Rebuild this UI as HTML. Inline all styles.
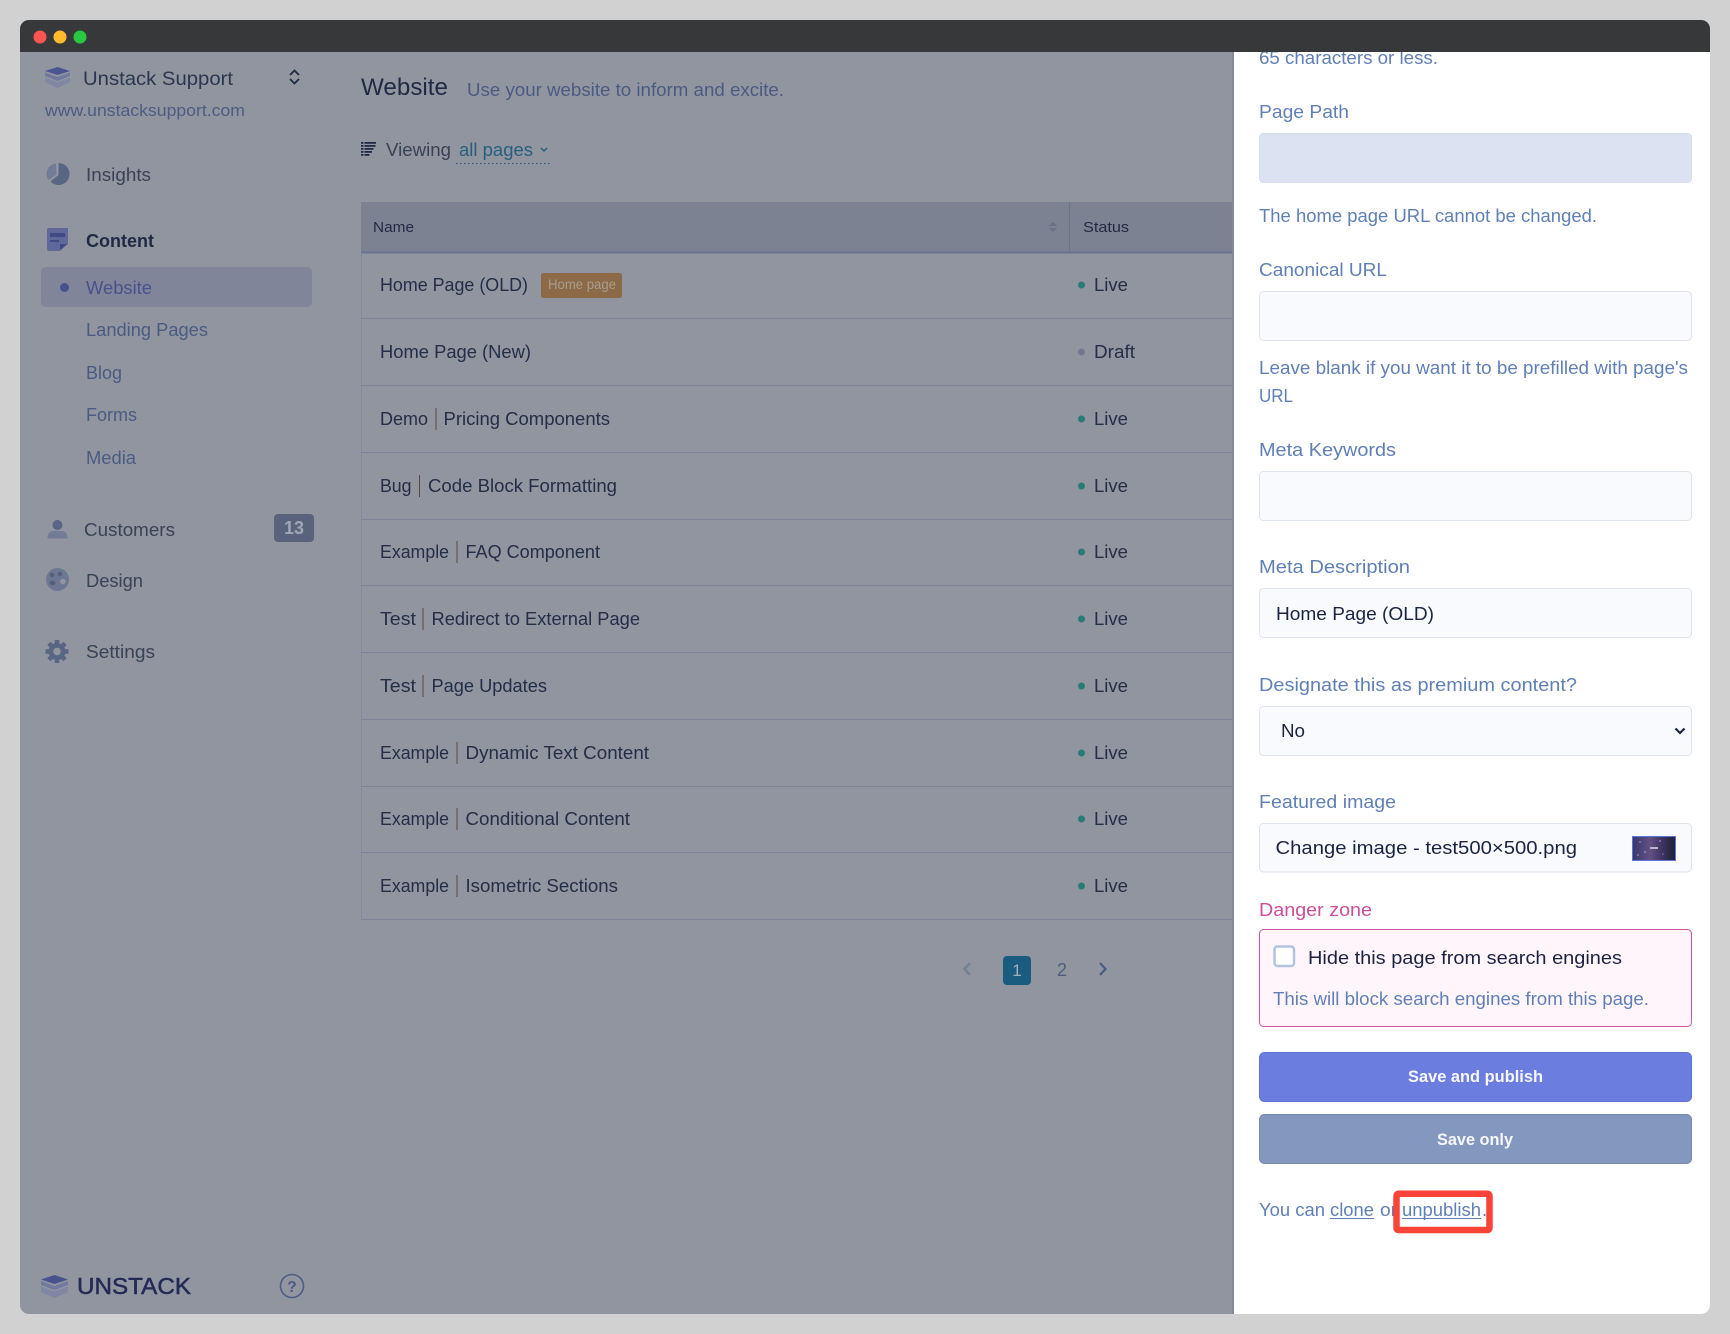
<!DOCTYPE html>
<html lang="en"><head><meta charset="utf-8"><title>Website</title>
<style>
html,body{margin:0;padding:0;background:#d1d1d1;width:1730px;height:1334px;overflow:hidden}
svg{display:block}
text{font-family:"Liberation Sans",sans-serif;font-size:18.5px;fill:#1f2a44}
.nav{fill:#3a4256}.sub{fill:#4a5b82}.lab{fill:#6080b5}.dk{fill:#1b2340}.live{fill:#252d48}
.p{font-size:23px;fill:#5f4a40}
</style></head><body>
<svg width="1730" height="1334" viewBox="0 0 1730 1334" xmlns="http://www.w3.org/2000/svg">
<defs>
<clipPath id="win"><rect x="20" y="20" width="1690" height="1294" rx="9"/></clipPath>
<linearGradient id="th" x1="0" y1="0" x2="1" y2="0"><stop offset="0" stop-color="#38386a"/><stop offset=".4" stop-color="#625084"/><stop offset=".7" stop-color="#3c3460"/><stop offset="1" stop-color="#1c2036"/></linearGradient>
</defs>
<rect width="1730" height="1334" fill="#d1d1d1"/>
<g clip-path="url(#win)">
<rect x="20" y="20" width="1690" height="1294" fill="#91959f"/>

<!-- sidebar -->
<path d="M57.5 67 L70 71 L57.5 75 L45 71Z" fill="#4a5490"/>
<path d="M45 72.5 L57.5 77 L70 72.5 L70 76 L57.5 81 L45 76Z" fill="#707a9e"/>
<path d="M45 77.5 L57.5 82.5 L70 77.5 L70 82 L57.5 88 L45 82Z" fill="#7f87a2"/>
<text x="83" y="85" style="font-size:19.5px;fill:#2c3650" textLength="150" lengthAdjust="spacingAndGlyphs">Unstack Support</text>
<path d="M290 75 L294.5 70.5 L299 75 M290 79 L294.5 83.5 L299 79" fill="none" stroke="#1f2a44" stroke-width="1.8"/>
<text x="45" y="116" style="font-size:16.5px;fill:#4c5c82" textLength="200" lengthAdjust="spacingAndGlyphs">www.unstacksupport.com</text>

<path d="M56 163.5 A10.5 10.5 0 0 0 48.5 180 L56.5 174.5Z" fill="#727c96"/>
<path d="M58.5 163 A11 11 0 1 1 50.5 181.5 L58.5 175Z" fill="#586583"/>
<text x="86" y="181" class="nav" textLength="65" lengthAdjust="spacingAndGlyphs">Insights</text>

<path d="M47 230 Q47 228 49 228 L68 228 L68 244 L60 251 L49 251 Q47 251 47 249Z" fill="#60689a"/>
<rect x="50" y="233" width="15" height="4" fill="#414a84"/><rect x="50" y="240" width="9" height="2" fill="#414a84"/>
<path d="M60 250 L60 244 L67 244Z" fill="#414a84"/>
<text x="86" y="247" style="font-weight:bold;fill:#1f2a44" textLength="68" lengthAdjust="spacingAndGlyphs">Content</text>

<rect x="41" y="267" width="271" height="40" rx="5" fill="#80859a"/>
<circle cx="64.5" cy="287.5" r="4.5" fill="#48528c"/>
<text x="86" y="294" style="fill:#48528c" textLength="66" lengthAdjust="spacingAndGlyphs">Website</text>
<text x="86" y="336" class="sub" textLength="122" lengthAdjust="spacingAndGlyphs">Landing Pages</text>
<text x="86" y="379" class="sub" textLength="36" lengthAdjust="spacingAndGlyphs">Blog</text>
<text x="86" y="421" class="sub" textLength="51" lengthAdjust="spacingAndGlyphs">Forms</text>
<text x="86" y="464" class="sub" textLength="50" lengthAdjust="spacingAndGlyphs">Media</text>

<circle cx="57.5" cy="525" r="5" fill="#586583"/>
<path d="M47.5 538.5 Q47.5 531.5 53 531 L62 531 Q67.5 531.5 67.5 538.5Z" fill="#727c96"/>
<text x="84" y="536" class="nav" textLength="91" lengthAdjust="spacingAndGlyphs">Customers</text>
<rect x="274" y="514" width="40" height="28" rx="4" fill="#5a637c"/>
<text x="294" y="534" text-anchor="middle" style="font-size:18px;font-weight:bold;fill:#a0a7b6">13</text>

<circle cx="57.5" cy="579.5" r="11.5" fill="#6d7792"/>
<circle cx="52" cy="575" r="2.2" fill="#545d7a"/><circle cx="60" cy="574" r="2.2" fill="#545d7a"/><ellipse cx="52.5" cy="583" rx="3" ry="2.2" fill="#545d7a"/><circle cx="63" cy="581.5" r="2.8" fill="#91959f"/>
<text x="86" y="587" class="nav" textLength="57" lengthAdjust="spacingAndGlyphs">Design</text>

<circle cx="57" cy="651.5" r="8.5" fill="#586583"/>
<g stroke="#586583" stroke-width="4.5"><path d="M57 640V663"/><path d="M45.5 651.5H68.5"/><path d="M48.9 643.4L65.1 659.6"/><path d="M48.9 659.6L65.1 643.4"/></g>
<circle cx="57" cy="651.5" r="3.8" fill="#91959f"/>
<text x="86" y="658" class="nav" textLength="69" lengthAdjust="spacingAndGlyphs">Settings</text>

<path d="M54.5 1275 L68 1279.5 L54.5 1284 L41 1279.5Z" fill="#48528c"/>
<path d="M41 1281 L54.5 1286 L68 1281 L68 1285 L54.5 1290 L41 1285Z" fill="#707a9e"/>
<path d="M41 1286.5 L54.5 1291.5 L68 1286.5 L68 1292 L54.5 1298 L41 1292Z" fill="#7f87a2"/>
<text x="77" y="1294" style="font-size:23.5px;fill:#232a55;stroke:#232a55;stroke-width:.5px" textLength="114" lengthAdjust="spacingAndGlyphs">UNSTACK</text>
<circle cx="292" cy="1286" r="11.5" fill="none" stroke="#4c5c82" stroke-width="1.6"/>
<text x="292" y="1292" text-anchor="middle" style="font-size:15.5px;font-weight:bold;fill:#4c5c82">?</text>

<!-- main -->
<text x="361" y="95" style="font-size:24.5px;fill:#1f2a44" textLength="87" lengthAdjust="spacingAndGlyphs">Website</text>
<text x="467" y="96" class="sub" textLength="317" lengthAdjust="spacingAndGlyphs">Use your website to inform and excite.</text>
<g fill="#232a48">
<rect x="361" y="142" width="2.5" height="1.8"/><rect x="361" y="145" width="2.5" height="1.8"/><rect x="361" y="148" width="2.5" height="1.8"/><rect x="361" y="151" width="2.5" height="1.8"/><rect x="361" y="154" width="2.5" height="1.8"/>
<rect x="364.5" y="142" width="11.5" height="1.8"/><rect x="364.5" y="145" width="11" height="1.8"/><rect x="364.5" y="148" width="9" height="1.8"/><rect x="364.5" y="151" width="7.5" height="1.8"/><rect x="364.5" y="154" width="5" height="1.8"/>
</g>
<text x="386" y="156" class="nav" textLength="65" lengthAdjust="spacingAndGlyphs">Viewing</text>
<text x="459" y="156" style="fill:#265f7e" textLength="74" lengthAdjust="spacingAndGlyphs">all pages</text>
<path d="M541 148 L544 151 L547 148" fill="none" stroke="#265f7e" stroke-width="1.5"/>
<path d="M456 163.5H552" stroke="#265f7e" stroke-width="1" stroke-dasharray="1.5 2.5"/>

<rect x="361" y="202" width="873" height="50" fill="#7d8292"/>
<rect x="361" y="251.5" width="873" height="2" fill="#6c7490"/>
<rect x="1069" y="202" width="1" height="50" fill="#6c738c"/>
<path d="M1053 221.7 L1057.3 226 H1048.7Z M1053 232 L1057.3 228 H1048.7Z" fill="#6b7184"/>
<text x="373" y="232" style="font-size:15px;fill:#1f2a44" textLength="41" lengthAdjust="spacingAndGlyphs">Name</text>
<text x="1083" y="232" style="font-size:15px;fill:#1f2a44" textLength="46" lengthAdjust="spacingAndGlyphs">Status</text>
<rect x="361" y="253" width="1" height="666" fill="#858b9c"/>
<g fill="#7e8497">
<rect x="361" y="318" width="873" height="1"/><rect x="361" y="385" width="873" height="1"/><rect x="361" y="452" width="873" height="1"/><rect x="361" y="519" width="873" height="1"/><rect x="361" y="585" width="873" height="1"/><rect x="361" y="652" width="873" height="1"/><rect x="361" y="719" width="873" height="1"/><rect x="361" y="786" width="873" height="1"/><rect x="361" y="852" width="873" height="1"/><rect x="361" y="919" width="873" height="1"/>
</g>

<text x="380" y="291" class="live" textLength="148" lengthAdjust="spacingAndGlyphs">Home Page (OLD)</text>
<text x="380" y="358" class="live" textLength="151" lengthAdjust="spacingAndGlyphs">Home Page (New)</text>

<text x="380" y="425" class="live" textLength="48" lengthAdjust="spacingAndGlyphs">Demo</text>
<text transform="translate(436 425) scale(.55 1)" class="p" text-anchor="middle">|</text>
<text x="443.5" y="425" class="live" textLength="166.5" lengthAdjust="spacingAndGlyphs">Pricing Components</text>

<text x="380" y="492" class="live" textLength="31.5" lengthAdjust="spacingAndGlyphs">Bug</text>
<text transform="translate(419.5 492) scale(.55 1)" class="p" text-anchor="middle">|</text>
<text x="428" y="492" class="live" textLength="189" lengthAdjust="spacingAndGlyphs">Code Block Formatting</text>

<text x="380" y="558" class="live" textLength="69" lengthAdjust="spacingAndGlyphs">Example</text>
<text transform="translate(457 558) scale(.55 1)" class="p" text-anchor="middle">|</text>
<text x="465.5" y="558" class="live" textLength="134.5" lengthAdjust="spacingAndGlyphs">FAQ Component</text>

<text x="380" y="625" class="live" textLength="36" lengthAdjust="spacingAndGlyphs">Test</text>
<text transform="translate(423 625) scale(.55 1)" class="p" text-anchor="middle">|</text>
<text x="431.5" y="625" class="live" textLength="208.5" lengthAdjust="spacingAndGlyphs">Redirect to External Page</text>

<text x="380" y="692" class="live" textLength="36" lengthAdjust="spacingAndGlyphs">Test</text>
<text transform="translate(423 692) scale(.55 1)" class="p" text-anchor="middle">|</text>
<text x="431.5" y="692" class="live" textLength="115.5" lengthAdjust="spacingAndGlyphs">Page Updates</text>

<text x="380" y="759" class="live" textLength="69" lengthAdjust="spacingAndGlyphs">Example</text>
<text transform="translate(457 759) scale(.55 1)" class="p" text-anchor="middle">|</text>
<text x="465.5" y="759" class="live" textLength="183.5" lengthAdjust="spacingAndGlyphs">Dynamic Text Content</text>

<text x="380" y="825" class="live" textLength="69" lengthAdjust="spacingAndGlyphs">Example</text>
<text transform="translate(457 825) scale(.55 1)" class="p" text-anchor="middle">|</text>
<text x="465.5" y="825" class="live" textLength="164.5" lengthAdjust="spacingAndGlyphs">Conditional Content</text>

<text x="380" y="892" class="live" textLength="69" lengthAdjust="spacingAndGlyphs">Example</text>
<text transform="translate(457 892) scale(.55 1)" class="p" text-anchor="middle">|</text>
<text x="465.5" y="892" class="live" textLength="152.5" lengthAdjust="spacingAndGlyphs">Isometric Sections</text>

<rect x="541" y="273" width="81" height="25" rx="2.5" fill="#8c6a48"/>
<text x="548" y="289" style="font-size:13.5px;fill:#a89e90" textLength="68" lengthAdjust="spacingAndGlyphs">Home page</text>

<g fill="#2a7a78">
<circle cx="1081.5" cy="285" r="3.5"/><circle cx="1081.5" cy="419" r="3.5"/><circle cx="1081.5" cy="486" r="3.5"/><circle cx="1081.5" cy="552" r="3.5"/><circle cx="1081.5" cy="619" r="3.5"/><circle cx="1081.5" cy="686" r="3.5"/><circle cx="1081.5" cy="753" r="3.5"/><circle cx="1081.5" cy="819" r="3.5"/><circle cx="1081.5" cy="886" r="3.5"/>
</g>
<circle cx="1081.5" cy="352" r="3.5" fill="#707890"/>
<text x="1094" y="291" class="live" textLength="34" lengthAdjust="spacingAndGlyphs">Live</text>
<text x="1094" y="358" class="live" textLength="41" lengthAdjust="spacingAndGlyphs">Draft</text>
<text x="1094" y="425" class="live" textLength="34" lengthAdjust="spacingAndGlyphs">Live</text>
<text x="1094" y="492" class="live" textLength="34" lengthAdjust="spacingAndGlyphs">Live</text>
<text x="1094" y="558" class="live" textLength="34" lengthAdjust="spacingAndGlyphs">Live</text>
<text x="1094" y="625" class="live" textLength="34" lengthAdjust="spacingAndGlyphs">Live</text>
<text x="1094" y="692" class="live" textLength="34" lengthAdjust="spacingAndGlyphs">Live</text>
<text x="1094" y="759" class="live" textLength="34" lengthAdjust="spacingAndGlyphs">Live</text>
<text x="1094" y="825" class="live" textLength="34" lengthAdjust="spacingAndGlyphs">Live</text>
<text x="1094" y="892" class="live" textLength="34" lengthAdjust="spacingAndGlyphs">Live</text>

<path d="M970 963 L964.5 969 L970 975" fill="none" stroke="#747f98" stroke-width="2.5"/>
<rect x="1003" y="956" width="28" height="29" rx="4" fill="#1a5c80"/>
<text x="1017" y="976" text-anchor="middle" style="font-size:17px;fill:#a0afbc">1</text>
<text x="1062" y="976" text-anchor="middle" style="font-size:18px;fill:#4e5d7c">2</text>
<path d="M1100 963 L1105.5 969 L1100 975" fill="none" stroke="#4a5b82" stroke-width="2.2"/>

<!-- panel -->
<rect x="1234" y="52" width="476" height="1262" fill="#ffffff"/>
<rect x="1232" y="52" width="2" height="1262" fill="#858a97"/>
<text x="1259" y="64" class="lab" textLength="179" lengthAdjust="spacingAndGlyphs">65 characters or less.</text>

<text x="1259" y="118" class="lab" textLength="90" lengthAdjust="spacingAndGlyphs">Page Path</text>
<rect x="1259.5" y="133.5" width="432" height="49" rx="4" fill="#dce2f1" stroke="#d5dcec"/>
<text x="1259" y="222" class="lab" textLength="338" lengthAdjust="spacingAndGlyphs">The home page URL cannot be changed.</text>

<text x="1259" y="276" class="lab" textLength="128" lengthAdjust="spacingAndGlyphs">Canonical URL</text>
<rect x="1259.5" y="291.5" width="432" height="49" rx="4" fill="#f9fafe" stroke="#dfe3ee"/>
<text x="1259" y="374" class="lab" textLength="429" lengthAdjust="spacingAndGlyphs">Leave blank if you want it to be prefilled with page's</text>
<text x="1259" y="402" class="lab" textLength="34" lengthAdjust="spacingAndGlyphs">URL</text>

<text x="1259" y="456" class="lab" textLength="137" lengthAdjust="spacingAndGlyphs">Meta Keywords</text>
<rect x="1259.5" y="471.5" width="432" height="49" rx="4" fill="#f9fafe" stroke="#dfe3ee"/>

<text x="1259" y="573" class="lab" textLength="151" lengthAdjust="spacingAndGlyphs">Meta Description</text>
<rect x="1259.5" y="588.5" width="432" height="49" rx="4" fill="#f9fafe" stroke="#dfe3ee"/>
<text x="1276" y="620" class="dk" textLength="158" lengthAdjust="spacingAndGlyphs">Home Page (OLD)</text>

<text x="1259" y="691" class="lab" textLength="318" lengthAdjust="spacingAndGlyphs">Designate this as premium content?</text>
<rect x="1259.5" y="706.5" width="432" height="49" rx="4" fill="#f9fafe" stroke="#dfe3ee"/>
<text x="1281" y="737" class="dk" textLength="24" lengthAdjust="spacingAndGlyphs">No</text>
<path d="M1675.5 728.5 L1680 733 L1684.5 728.5" fill="none" stroke="#1b2340" stroke-width="2.2"/>

<text x="1259" y="808" class="lab" textLength="137" lengthAdjust="spacingAndGlyphs">Featured image</text>
<rect x="1259.5" y="823.5" width="432" height="48.5" rx="4" fill="#f9fafe" stroke="#dfe3ee"/>
<text x="1275.5" y="854" class="dk" textLength="301.5" lengthAdjust="spacingAndGlyphs">Change image - test500×500.png</text>
<rect x="1632.5" y="836.5" width="43" height="24" fill="url(#th)" stroke="#5f72d5"/>
<g fill="#8a78a8"><circle cx="1640" cy="842" r="1"/><circle cx="1645" cy="852" r="1.2"/><circle cx="1660" cy="841" r="1"/><circle cx="1638" cy="855" r="1"/><circle cx="1663" cy="854" r=".8"/></g>
<rect x="1650" y="847" width="8" height="2" fill="#b9b5c8"/>

<text x="1259" y="916" style="fill:#cb4f9a" textLength="113" lengthAdjust="spacingAndGlyphs">Danger zone</text>
<rect x="1259.5" y="929.5" width="432" height="97" rx="4" fill="#fff5fb" stroke="#cf55a0"/>
<rect x="1274.5" y="946.5" width="19.5" height="19.5" rx="3" fill="#ffffff" stroke="#b3c3e0" stroke-width="2.5"/>
<text x="1308" y="964" class="dk" textLength="314" lengthAdjust="spacingAndGlyphs">Hide this page from search engines</text>
<text x="1273" y="1005" class="lab" textLength="376" lengthAdjust="spacingAndGlyphs">This will block search engines from this page.</text>

<rect x="1259.5" y="1052.5" width="432" height="49" rx="5" fill="#6c7de0" stroke="#6172d2"/>
<text x="1408" y="1082" style="font-size:16.5px;font-weight:bold;fill:#f6f7fd" textLength="135" lengthAdjust="spacingAndGlyphs">Save and publish</text>
<rect x="1259.5" y="1114.5" width="432" height="49" rx="5" fill="#8397bf" stroke="#7689b0"/>
<text x="1437" y="1145" style="font-size:16.5px;font-weight:bold;fill:#f6f7fd" textLength="76" lengthAdjust="spacingAndGlyphs">Save only</text>

<text x="1259" y="1216" class="lab" textLength="66" lengthAdjust="spacingAndGlyphs">You can</text>
<text x="1330" y="1216" class="lab" textLength="44" lengthAdjust="spacingAndGlyphs">clone</text>
<rect x="1330" y="1218" width="44" height="1" fill="#6080b5"/>
<text x="1380" y="1216" class="lab" textLength="17" lengthAdjust="spacingAndGlyphs">or</text>
<text x="1402" y="1216" class="lab" textLength="79" lengthAdjust="spacingAndGlyphs">unpublish</text>
<rect x="1402" y="1218" width="79" height="1" fill="#6080b5"/>
<text x="1482" y="1216" class="lab">.</text>
<rect x="1396.5" y="1193.7" width="93" height="36.3" rx="2" fill="none" stroke="#f94437" stroke-width="6.5"/>

<!-- title bar -->
<rect x="20" y="20" width="1690" height="32" fill="#37383a"/>
<circle cx="40" cy="37" r="6.5" fill="#ff5450"/>
<circle cx="60" cy="37" r="6.5" fill="#ffbd2e"/>
<circle cx="80" cy="37" r="6.5" fill="#28c840"/>
</g>
</svg>
</body></html>
